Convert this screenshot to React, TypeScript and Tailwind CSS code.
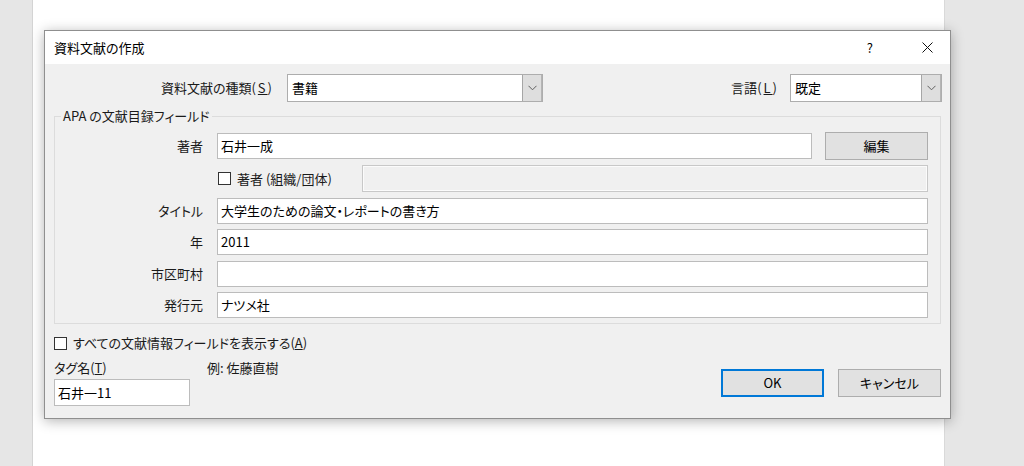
import React from "react";

const font = "font-['Yu_Gothic_UI','Noto_Sans_CJK_JP',sans-serif] [font-feature-settings:'palt']";

function Chevron() {
  return (
    <svg width="9" height="6" viewBox="0 0 9 6" fill="none">
      <path d="M0.5 0.8 L4.5 4.8 L8.5 0.8" stroke="#606060" strokeWidth="1" />
    </svg>
  );
}

function Select({ value, width }: { value: string; width: string }) {
  return (
    <div className={`${width} h-[28px] flex border border-[#adadad] bg-white`}>
      <div className="flex-1 flex items-center pl-[4px] text-black">{value}</div>
      <div className="w-[20px] flex items-center justify-center bg-[#dedede] border-l border-[#a6a6a6] border-r border-r-[#b5b5b5]">
        <Chevron />
      </div>
    </div>
  );
}

function TextBox({ value, className = "" }: { value?: string; className?: string }) {
  return (
    <div
      className={`h-[26px] flex items-center pl-[3px] bg-white border border-[#bcbcbc] text-black ${className}`}
    >
      {value}
    </div>
  );
}

function CheckBox() {
  return <div className="w-[13px] h-[13px] border border-[#333333] bg-white shrink-0" />;
}

function Field({ label, value, className = "" }: { label: string; value?: string; className?: string }) {
  return (
    <div className={`flex items-center ${className}`}>
      <div className="w-[148px] text-right">{label}</div>
      <TextBox value={value} className="ml-[14px] flex-1" />
    </div>
  );
}

function Button({ label, primary = false }: { label: string; primary?: boolean }) {
  return (
    <div
      className={`w-[103px] h-[28px] flex items-center justify-center bg-[#e1e1e1] text-black ${
        primary ? "border-2 border-[#0078d7]" : "border border-[#adadad]"
      }`}
    >
      {label}
    </div>
  );
}

export default function App() {
  return (
    <div className={`relative w-[1024px] h-[466px] overflow-hidden flex bg-[#e6e6e6] ${font} text-[13px] leading-[16px] text-[#1a1a1a]`}>
      {/* document behind */}
      <div className="w-[33px] border-r border-[#d4d4d4]" />
      <div className="w-[912px] bg-white border-r border-[#d9d9d9]" />

      {/* dialog */}
      <div className="absolute left-[44px] top-[30px] w-[907px] h-[389px] flex flex-col bg-[#f0f0f0] border border-[#8f8f8f] shadow-[0_2px_12px_rgba(0,0,0,0.3)]">
        {/* title bar */}
        <div className="h-[33px] bg-white flex items-center pl-[9px] shrink-0">
          <span className="text-black">資料文献の作成</span>
          <span className="ml-auto mr-[31px] text-black">?</span>
          <div className="w-[46px] h-full flex items-center justify-center">
            <svg width="11" height="11" viewBox="0 0 11 11">
              <path d="M0.5 0.5 L10.5 10.5 M10.5 0.5 L0.5 10.5" stroke="#111" strokeWidth="1" />
            </svg>
          </div>
        </div>

        <div className="flex flex-col pl-[9px] pr-[8px]">
          {/* type / language */}
          <div className="mt-[10px] h-[28px] flex items-center">
            <div className="w-[220px] text-right">
              資料文献の種類<span className="tracking-[2px]">(<span className="underline">S</span>)</span>
            </div>
            <div className="ml-[13px]">
              <Select value="書籍" width="w-[256px]" />
            </div>
            <div className="ml-auto">
              言語<span className="tracking-[2px]">(<span className="underline">L</span>)</span>
            </div>
            <div className="ml-[11px]">
              <Select value="既定" width="w-[152px]" />
            </div>
          </div>

          {/* APA group */}
          <fieldset className="mt-[6px] mr-[1px] border border-[#dcdcdc] pt-[8px] pb-[5px] pr-[12px] flex flex-col">
            <legend className="ml-[6px] px-[2px] leading-[16px]">APA の文献目録フィールド</legend>
            <div className="flex items-center">
              <div className="w-[148px] text-right">著者</div>
              <TextBox value="石井一成" className="ml-[14px] flex-1" />
              <div className="ml-[13px]">
                <Button label="編集" />
              </div>
            </div>
            <div className="mt-[5px] flex items-center h-[27px]">
              <div className="w-[148px]" />
              <div className="ml-[15px] w-[144px] flex items-center">
                <CheckBox />
                <span className="ml-[6px]">著者 (組織/団体)</span>
              </div>
              <div className="flex-1 h-[27px] border border-[#c8c8c8] bg-[#f0f0f0] shadow-[inset_0_0_0_1px_#fbfbfb]" />
            </div>
            <Field label="タイトル" value="大学生のための論文・レポートの書き方" className="mt-[6px]" />
            <Field label="年" value="2011" className="mt-[5px]" />
            <Field label="市区町村" className="mt-[6px]" />
            <Field label="発行元" value="ナツメ社" className="mt-[5px]" />
          </fieldset>

          {/* show all fields */}
          <div className="mt-[11px] h-[16px] flex items-center">
            <CheckBox />
            <span className="ml-[6px]">
              すべての文献情報フィールドを表示する(<span className="underline">A</span>)
            </span>
          </div>

          {/* tag + buttons */}
          <div className="mt-[9px] flex">
            <div className="w-[153px] flex flex-col">
              <div>
                タグ名(<span className="underline">T</span>)
              </div>
              <TextBox value="石井一11" className="mt-[3px] w-[136px] h-[27px]" />
            </div>
            <div>例: 佐藤直樹</div>
            <div className="ml-auto mr-[1px] mt-[9px] flex gap-[14px] self-start">
              <Button label="OK" primary />
              <Button label="キャンセル" />
            </div>
          </div>
        </div>
      </div>
    </div>
  );
}
